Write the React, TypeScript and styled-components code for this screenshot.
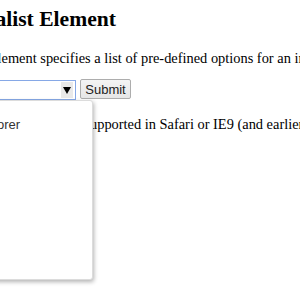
import React, { useState } from 'react';
import styled, { createGlobalStyle } from 'styled-components';

const GlobalStyle = createGlobalStyle`
  html {
    overflow: hidden;
    background: #ffffff;
  }
  body {
    margin: 0;
    min-height: 300px;
    font-family: "Liberation Serif", "Times New Roman", serif;
    color: #000000;
  }
`;

// the page is scrolled a little to the right, so its left edge sits off screen
const Page = styled.div`
  margin-left: -80px;
  width: 480px;
  min-height: 300px;
`;

const Title = styled.h2`
  font-size: 21.6px;
  line-height: 25px;
  font-weight: bold;
  margin: 7px 0 18px;
  padding-left: 4px;
  white-space: nowrap;
`;

const Text = styled.p`
  font-size: 14.4px;
  line-height: 17px;
  margin: 0;
  white-space: nowrap;
`;

const Form = styled.form`
  display: flex;
  align-items: flex-start;
  gap: 4px;
  margin: 12px 0 16px;
`;

const Field = styled.div`
  position: relative;
  margin-top: 1px;
`;

const Input = styled.input`
  box-sizing: border-box;
  width: 156px;
  height: 20px;
  padding: 1px 16px 1px 3px;
  border: 1px solid #86a8e6;
  border-radius: 0;
  outline: none;
  font-family: Arial, "Liberation Sans", sans-serif;
  font-size: 13px;
  background: #ffffff;
`;

const Arrow = styled.span`
  position: absolute;
  right: 3px;
  top: 2px;
  width: 12px;
  height: 16px;
  display: flex;
  align-items: center;
  justify-content: center;
  background: #e9e9e9;
  pointer-events: none;

  &::after {
    content: '';
    border-left: 4px solid transparent;
    border-right: 4px solid transparent;
    border-top: 7px solid #000000;
  }
`;

const Popup = styled.ul`
  position: absolute;
  left: 0;
  top: 20px;
  width: 173px;
  height: 180px;
  box-sizing: border-box;
  margin: 0;
  padding: 8px 0 12px;
  list-style: none;
  background: #ffffff;
  border: 1px solid #dcdcdc;
  border-radius: 3px;
  box-shadow: 1px 2px 4px rgba(0, 0, 0, 0.3);
  z-index: 2;
`;

const Option = styled.li`
  height: 32px;
  line-height: 32px;
  padding-left: 3px;
  font-family: Arial, "Liberation Sans", sans-serif;
  font-size: 13px;
  color: #333333;
  white-space: nowrap;
`;

const Submit = styled.button`
  box-sizing: border-box;
  width: 51px;
  height: 20px;
  padding: 0;
  border: 1px solid #adadad;
  border-radius: 2px;
  background: linear-gradient(#f4f4f4, #e6e6e6);
  font-family: Arial, "Liberation Sans", sans-serif;
  font-size: 13px;
  color: #222222;
`;

const browsers = ['Internet Explorer', 'Firefox', 'Chrome', 'Opera', 'Safari'];

export default function App() {
  const [value, setValue] = useState('');

  return <>
    <GlobalStyle />
    <Page>
      <Title>The datalist Element</Title>
      <Text>The datalist element specifies a list of pre-defined options for an input element.</Text>
      <Form onSubmit={(e) => e.preventDefault()}>
        <Field>
          <Input list="browsers" value={value} onChange={(e) => setValue(e.target.value)} />
          <Arrow />
          <Popup>
            {browsers.map((b) => <Option key={b}>{b}</Option>)}
          </Popup>
        </Field>
        <Submit type="submit">Submit</Submit>
      </Form>
      <Text><strong>Note:</strong> The datalist tag is not supported in Safari or IE9 (and earlier).</Text>
    </Page>
  </>;
}
